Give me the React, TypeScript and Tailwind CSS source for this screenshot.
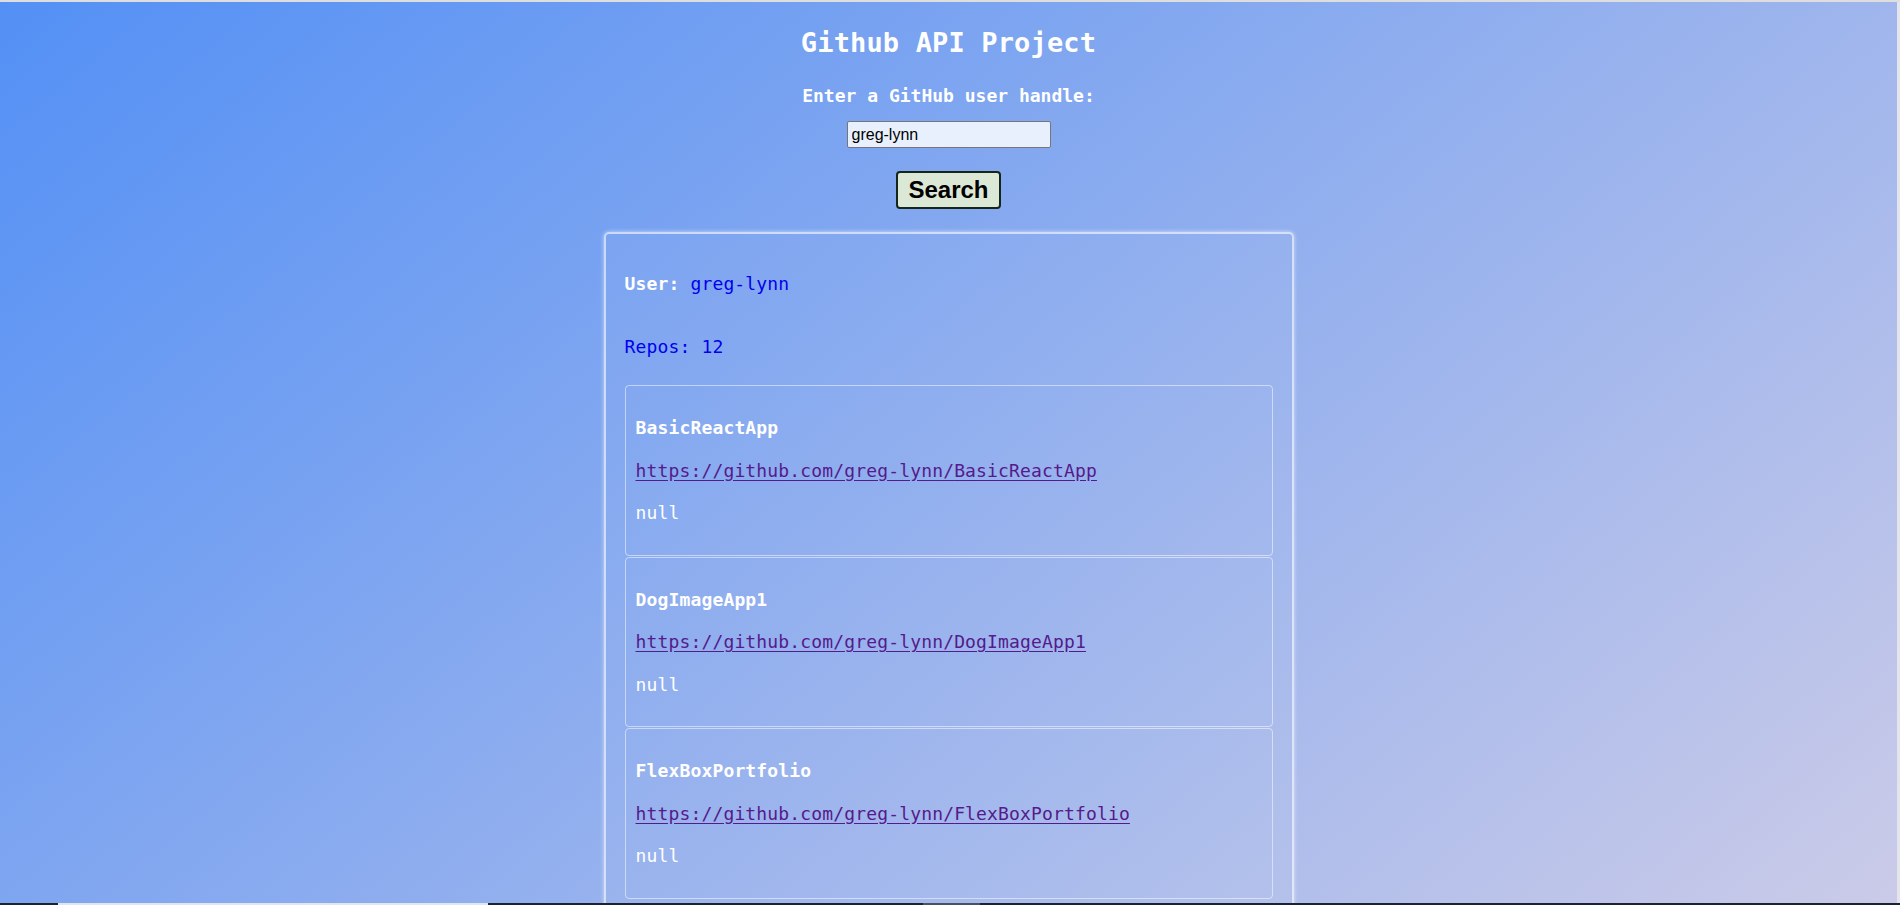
const repos = ['BasicReactApp', 'DogImageApp1', 'FlexBoxPortfolio']

function RepoCard({ name }: { name: string }) {
  return (
    <div className="flex shrink-0 flex-col gap-[18.5px] rounded-[4px] border border-white/50 px-[10px] pt-[30px] pb-[29.5px] text-[18px] leading-[24px] tracking-[0.15px]">
      <h3 className="font-bold text-white">{name}</h3>
      <a href="#" className="text-[#551a8b] underline underline-offset-[3px]">
        https://github.com/greg-lynn/{name}
      </a>
      <p className="text-white">null</p>
    </div>
  )
}

export default function App() {
  return (
    <div className="flex h-screen flex-col overflow-hidden [font-family:'DejaVu_Sans_Mono',monospace]">
      <div className="h-[2px] shrink-0 bg-[#dedede]" />
      <div className="flex min-h-0 flex-1 bg-[linear-gradient(140deg,#5390f5,#cbcbe8)]">
        <main className="flex flex-1 flex-col items-center [&>*]:shrink-0">
          <h1 className="mt-[25px] text-[27px] leading-[32px] font-bold tracking-[0.15px] text-white">
            Github API Project
          </h1>
          <p className="mt-[25px] text-[18px] leading-[24px] font-bold text-white">
            Enter a GitHub user handle:
          </p>
          <input
            defaultValue="greg-lynn"
            className="mt-[13px] h-[27px] w-[204px] rounded-[2px] border border-[#767676] bg-[#e8f0fe] px-[4px] text-[16px] text-black outline-none [font-family:'Liberation_Sans',Arial,sans-serif]"
          />
          <button className="mt-[23px] h-[38px] w-[105px] rounded-[4px] border-2 border-[#14261a] bg-[#dbe8d5] text-[24px] leading-none font-bold text-black [font-family:'Liberation_Sans',Arial,sans-serif]">
            Search
          </button>

          <section className="mt-[23px] w-[690px] rounded-[5px] border-2 border-white/60 bg-white/[0.03] px-[19px] pt-[38px] pb-[200px] shadow-[0_0_4px_rgba(255,255,255,0.6)]">
            <h3 className="text-[18px] leading-[24px] font-bold tracking-[0.15px] text-white">
              User: <span className="font-normal text-[#0000ee]">greg-lynn</span>
            </h3>
            <p className="mt-[39px] text-[18px] leading-[24px] tracking-[0.15px] text-[#0000ee]">Repos: 12</p>
            <div className="mt-[26px] flex flex-col gap-px">
              {repos.map((r) => (
                <RepoCard key={r} name={r} />
              ))}
            </div>
          </section>
        </main>
        <div className="w-[3px] shrink-0 bg-[#e4e4ec]" />
      </div>

      {/* taskbar edge peeking in at the bottom */}
      <div className="fixed inset-x-0 bottom-0 flex h-[2px] bg-[#1b2232]">
        <div className="w-[58px]" />
        <div className="w-[430px] bg-[#dfe6f2]" />
        <div className="w-[435px]" />
        <div className="w-[57px] bg-[#4a5262]" />
      </div>
    </div>
  )
}
